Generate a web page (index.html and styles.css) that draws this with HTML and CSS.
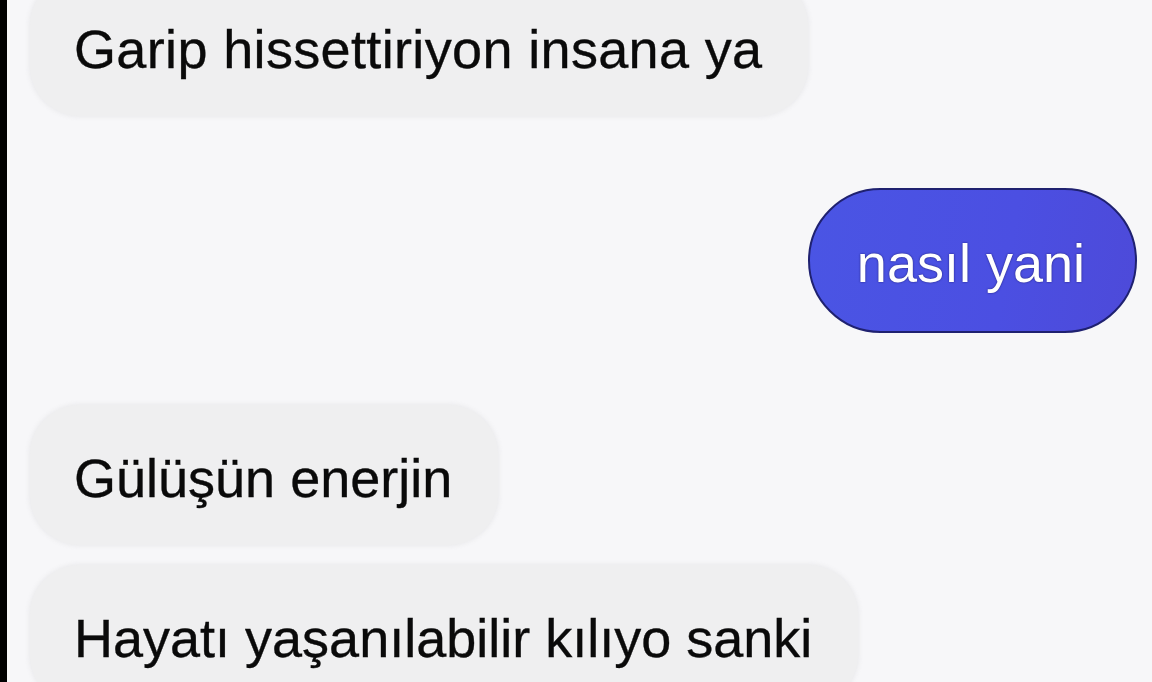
FILE: index.html
```html
<!DOCTYPE html>
<html lang="tr">
<head>
<meta charset="utf-8">
<link rel="stylesheet" href="styles.css">
<title>Sohbet</title>
</head>
<body>
<div class="screen">
  <div class="edge"></div>
  <div class="chat">
    <div class="row row-first"><div class="bubble in wide">Garip hissettiriyon insana ya</div></div>
    <div class="row out-row"><div class="bubble out">nasıl yani</div></div>
    <div class="row row-gap"><div class="bubble in">Gülüşün enerjin</div></div>
    <div class="row row-tight"><div class="bubble in">Hayatı yaşanılabilir kılıyo sanki</div></div>
  </div>
</div>
</body>
</html>
```
FILE: styles.css
```css
html, body {
  margin: 0;
  padding: 0;
  background: #f7f7f9;
}
.screen {
  width: 1152px;
  height: 682px;
  overflow: hidden;
  display: flex;
  background: #f7f7f9;
  font-family: "Liberation Sans", Arial, sans-serif;
}
.edge {
  width: 7px;
  flex: 0 0 7px;
  background: #000;
}
.chat {
  flex: 1;
  display: flex;
  flex-direction: column;
  padding: 0 15px 0 23px;
}
.row {
  display: flex;
}
.row-first {
  margin-top: -24px;
}
.out-row {
  justify-content: flex-end;
  margin-top: 72px;
}
.row-gap {
  margin-top: 72px;
}
.row-tight {
  margin-top: 20px;
}
.bubble {
  font-size: 54px;
  line-height: 54px;
  white-space: nowrap;
  flex: 0 0 auto;
  -webkit-text-stroke: 0.35px currentColor;
}
.in {
  background: #efeff0;
  color: #0a0a0a;
  border-radius: 50px;
  padding: 46px 46px 40px 44px;
  box-shadow: 0 0 4px 1px rgba(232, 232, 234, 0.9);
}
.wide {
  letter-spacing: 0.35px;
}
.out {
  background: linear-gradient(100deg, #4a55e4 0%, #4b4fe2 60%, #4d4ad9 100%);
  color: #ffffff;
  border: 2px solid #1f2170;
  border-radius: 75px;
  padding: 46px 50px 41px 47px;
  text-shadow: 0 0 2px rgba(20, 20, 90, 0.85);
  -webkit-text-stroke: 0;
}
```
